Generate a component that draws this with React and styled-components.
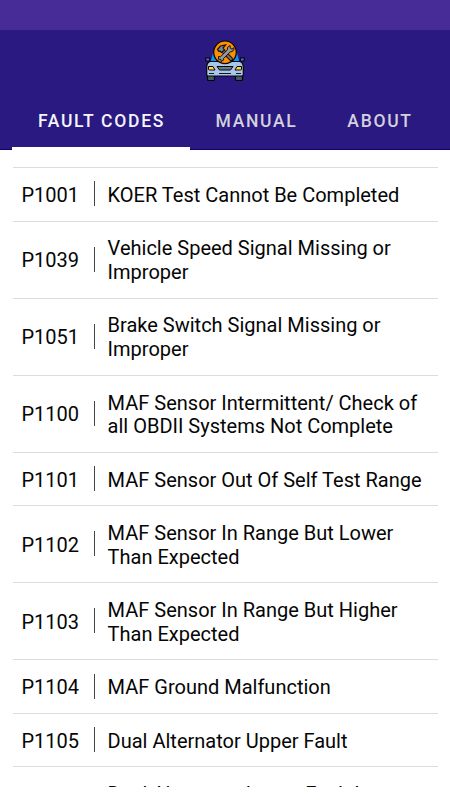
import React from 'react'
import styled, { createGlobalStyle } from 'styled-components'

const tabs = [
  { name: 'FAULT CODES', width: 178, active: true },
  { name: 'MANUAL', width: 132 },
  { name: 'ABOUT', width: 115 },
]

const codes = [
  { code: 'P1001', text: ['KOER Test Cannot Be Completed'] },
  { code: 'P1039', text: ['Vehicle Speed Signal Missing or', 'Improper'] },
  { code: 'P1051', text: ['Brake Switch Signal Missing or', 'Improper'] },
  { code: 'P1100', text: ['MAF Sensor Intermittent/ Check of', 'all OBDII Systems Not Complete'] },
  { code: 'P1101', text: ['MAF Sensor Out Of Self Test Range'] },
  { code: 'P1102', text: ['MAF Sensor In Range But Lower', 'Than Expected'] },
  { code: 'P1103', text: ['MAF Sensor In Range But Higher', 'Than Expected'] },
  { code: 'P1104', text: ['MAF Ground Malfunction'] },
  { code: 'P1105', text: ['Dual Alternator Upper Fault'] },
]

const CarLogo = () => (
  <Logo viewBox="0 0 40 42">
    <g stroke="#050505" strokeWidth="1.2" strokeLinejoin="round">
      <path d="M2.5 35h7v4.500q0 1-1 1h-5q-1 0-1-1zM30.500 35h7v4.500q0 1-1 1h-5q-1 0-1-1z" fill="#455a64" />
      <path d="M.7 18h4v3h-3q-1 0-1-1zM35.300 18h4v2q0 1-1 1h-3z" fill="#5c6bc0" />
      <path d="M5.500 22l2.500-9h24l2.500 9z" fill="#0a96ea" stroke="none" />
      <path d="M5 21.500h30q3.300 1 3.300 6v7q0 1.500-1.500 1.500h-33.600q-1.500 0-1.500-1.500v-7q0-5 3.300-6z" fill="#a9c6ea" />
      <path d="M3.500 26.500h4.500l2 3.500h-5.500q-1 0-1-1zM36.500 26.500h-4.500l-2 3.500h5.500q1 0 1-1z" fill="#fdd835" strokeWidth="1" />
      <path d="M12 26.500h16l-2.500 3.500h-11z" fill="#607d8b" strokeWidth="1" />
      <path d="M4 33.500h5M14 33.500h12M31 33.500h5" strokeWidth=".9" />
      <circle cx="20" cy="12.300" r="11.300" fill="#ff8f00" />
    </g>
    <path d="M17.500 10.500l8.500 8.500" stroke="#111" strokeWidth="4" strokeLinecap="round" />
    <path d="M18 11l8 8" stroke="#8d6e63" strokeWidth="1.800" strokeLinecap="round" />
    <path d="M12.500 9.500l3-3.500 5-1-2.500 3 1.500 2-3 2.500-1.500-1.500-1 .5z" fill="#7d8991" stroke="#111" strokeWidth="1.200" />
    <path
      d="M13.500 16.500l2 .2 6.800-6.700q-.8-3.200 2.700-4.500l.3 2.700 1.700 1 2-1.500q.3 3.800-3.800 4.300l-6.700 6.500.2 1.500-2.500 1.500-.3-2-2.400-.3z"
      fill="#8f999e"
      stroke="#111"
      strokeWidth="1"
      strokeLinejoin="round"
    />
  </Logo>
)

const App = () => {
  return (
    <Screen>
      <GlobalStyle />
      <StatusBar />
      <Header>
        <CarLogo />
        <Tabs>
          {tabs.map((tab) => (
            <Tab key={tab.name} $width={tab.width} $active={tab.active}>{tab.name}</Tab>
          ))}
        </Tabs>
      </Header>
      <List>
        {codes.map((item) => (
          <Row key={item.code}>
            <Code>{item.code}</Code>
            <Divider />
            <Description>
              {item.text.map((line) => <span key={line}>{line}</span>)}
            </Description>
          </Row>
        ))}
        <Row>
          <Code />
          <Description $last>Dual Alternator Lower Fault I</Description>
        </Row>
      </List>
    </Screen>
  )
}

const GlobalStyle = createGlobalStyle`
  body{
    margin:0;
    background:#fff;
    font-family:Roboto, sans-serif;
  }
`;

const Screen = styled.div`
  width:450px;
  height:800px;
  overflow:hidden;
  background:#fff;
`;

const StatusBar = styled.div`
  height:30px;
  background:#472b96;
`;

const Header = styled.header`
  display:flex;
  flex-direction:column;
  justify-content:space-between;
  align-items:center;
  box-sizing:border-box;
  height:120px;
  padding-top:10px;
  background:#291981;
  box-shadow:inset 0 -1px 0 #12006b;
`;

const Logo = styled.svg`
  width:40px;
  height:42px;
  fill:none;
`;

const Tabs = styled.nav`
  display:flex;
  width:426px;
`;

const Tab = styled.div`
  box-sizing:border-box;
  width:${(props) => props.$width}px;
  height:60px;
  padding-left:1px;
  line-height:62px;
  border-bottom:3px solid ${(props) => (props.$active ? '#fff' : 'transparent')};
  color:${(props) => (props.$active ? '#f5f4fa' : '#d3d1dc')};
  font-size:17.5px;
  font-weight:500;
  letter-spacing:1.7px;
  text-align:center;
  white-space:nowrap;
`;

const List = styled.main`
  box-sizing:border-box;
  height:637px;
  margin:0 12.5px;
  padding-top:17.2px;
  overflow:hidden;
`;

const Row = styled.div`
  display:flex;
  align-items:center;
  box-sizing:border-box;
  padding:15.8px 0 12.9px;
  border-top:1px solid #dcdcdc;
  color:#050505;
  font-size:20px;
  line-height:23.7px;
`;

const Code = styled.div`
  width:81.5px;
  padding-left:9px;
  box-sizing:border-box;
`;

const Divider = styled.div`
  width:1px;
  height:25px;
  margin-top:-4px;
  background:#444;
`;

const Description = styled.div`
  display:flex;
  flex-direction:column;
  padding-left:${(props) => (props.$last ? 13.6 : 12.6)}px;
  white-space:nowrap;
`;

export default App
